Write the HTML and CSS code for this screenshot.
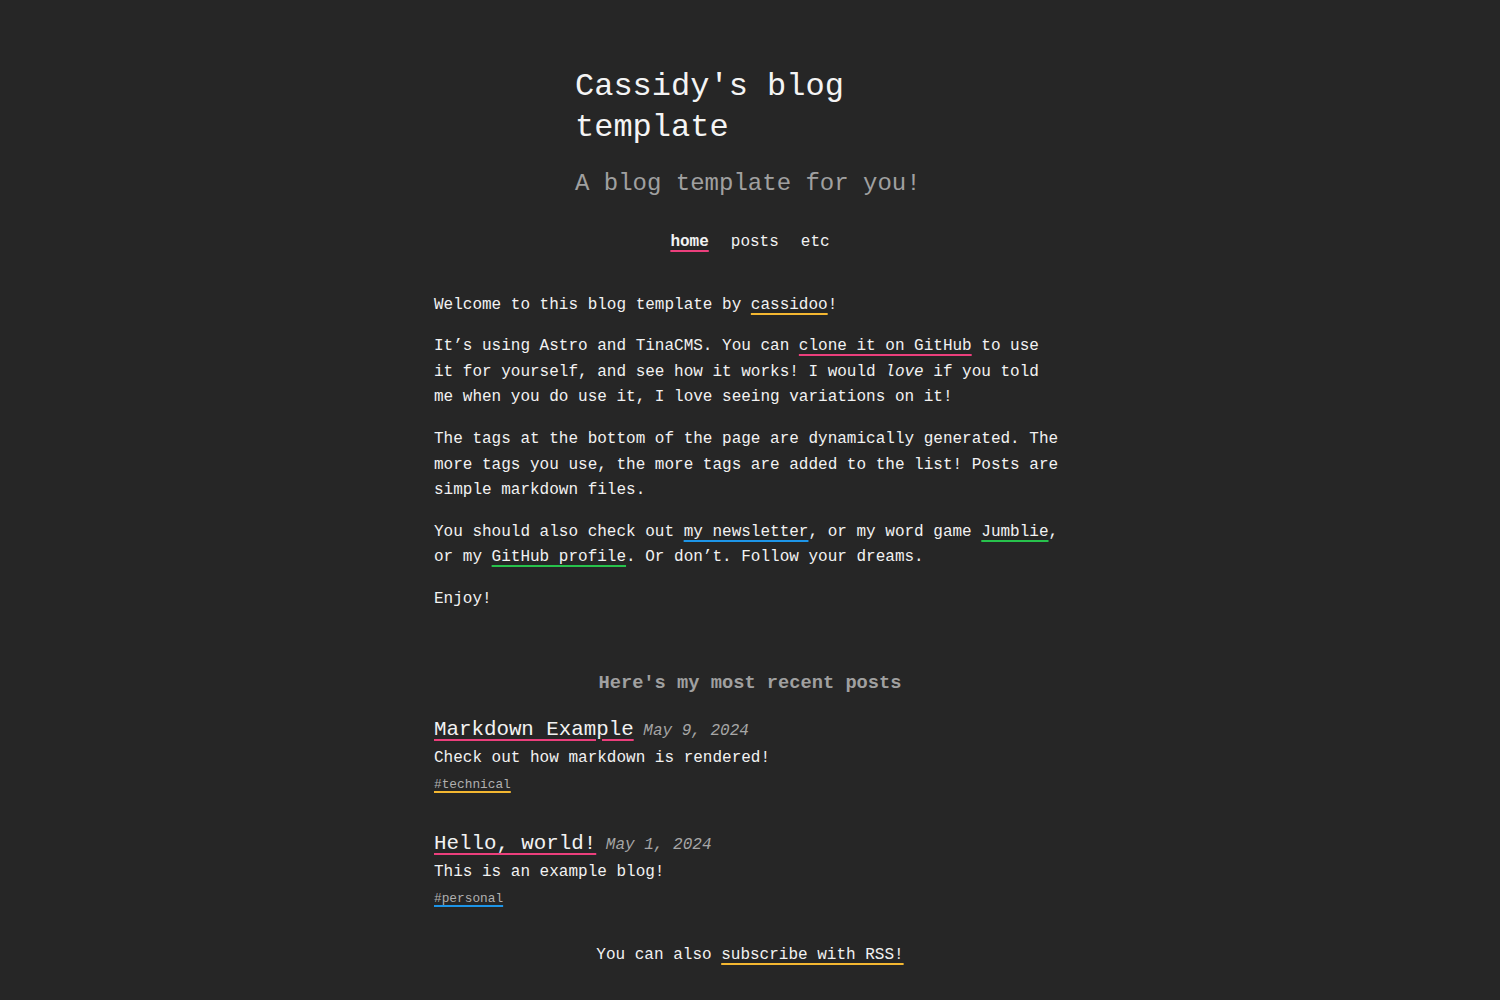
FILE: index.html
```html
<!DOCTYPE html>
<html lang="en">
<head>
<meta charset="utf-8">
<title>Cassidy's blog template</title>
<link rel="stylesheet" href="styles.css">
</head>
<body>
<header class="site-header">
  <h1 class="site-title">Cassidy's blog template</h1>
  <p class="site-subtitle">A blog template for you!</p>
</header>
<nav class="site-nav">
  <a class="nav-link active" href="#">home</a>
  <a class="nav-link" href="#">posts</a>
  <a class="nav-link" href="#">etc</a>
</nav>
<main class="content">
  <section class="intro">
    <p>Welcome to this blog template by <a class="u-yellow" href="#">cassidoo</a>!</p>
    <p>It’s using Astro and TinaCMS. You can <a class="u-pink" href="#">clone it on GitHub</a> to use it for yourself, and see how it works! I would <em>love</em> if you told me when you do use it, I love seeing variations on it!</p>
    <p>The tags at the bottom of the page are dynamically generated. The more tags you use, the more tags are added to the list! Posts are simple markdown files.</p>
    <p>You should also check out <a class="u-blue" href="#">my newsletter</a>, or my word game <a class="u-green" href="#">Jumblie</a>, or my <a class="u-green" href="#">GitHub profile</a>. Or don’t. Follow your dreams.</p>
    <p>Enjoy!</p>
  </section>
  <section class="recent">
    <h3 class="recent-heading">Here's my most recent posts</h3>
    <article class="post">
      <div class="post-head"><a class="post-title u-pink" href="#">Markdown Example</a> <span class="post-date">May 9, 2024</span></div>
      <p class="post-desc">Check out how markdown is rendered!</p>
      <a class="tag u-yellow" href="#">#technical</a>
    </article>
    <article class="post">
      <div class="post-head"><a class="post-title u-pink" href="#">Hello, world!</a> <span class="post-date">May 1, 2024</span></div>
      <p class="post-desc">This is an example blog!</p>
      <a class="tag u-blue" href="#">#personal</a>
    </article>
  </section>
  <p class="rss">You can also <a class="u-yellow" href="#">subscribe with RSS!</a></p>
</main>
</body>
</html>
```
FILE: styles.css
```css
html, body {
  margin: 0;
  padding: 0;
}
body {
  background: #262626;
  color: #f2f2f2;
  font-family: "Liberation Mono", "DejaVu Sans Mono", monospace;
  font-size: 16px;
  line-height: 1.6;
}
a {
  color: #f2f2f2;
  text-decoration: underline;
  text-decoration-thickness: 2px;
  text-underline-offset: 4px;
}
.u-pink { text-decoration-color: #ec3f7c; }
.u-yellow { text-decoration-color: #f4b731; }
.u-blue { text-decoration-color: #1d95e8; }
.u-green { text-decoration-color: #27c24c; }

.site-header {
  width: 350px;
  margin: 0 auto;
  padding-top: 66px;
}
.site-title {
  margin: 0;
  font-size: 32px;
  line-height: 41px;
  font-weight: 400;
  color: #f4f4f4;
}
.site-subtitle {
  margin: 20px 0 0;
  font-size: 24px;
  line-height: 31px;
  color: #a0a0a0;
}
.site-nav {
  display: flex;
  justify-content: center;
  gap: 22px;
  margin-top: 31px;
}
.nav-link {
  text-decoration: none;
}
.nav-link.active {
  font-weight: 700;
  text-decoration: underline;
  text-decoration-color: #ec3f7c;
  text-decoration-thickness: 2px;
  text-underline-offset: 4px;
}
.content {
  width: 632px;
  margin: 37px auto 0;
}
.intro p {
  margin: 0 0 16px;
}
em {
  font-style: italic;
}
.recent {
  margin-top: 55px;
}
.recent-heading {
  margin: 0 0 17px;
  text-align: center;
  font-size: 18.72px;
  line-height: 30px;
  color: #a0a0a0;
  font-weight: 700;
}
.post {
  margin-bottom: 31px;
}
.post-head {
  line-height: 29px;
}
.post-title {
  font-size: 20.8px;
  text-underline-offset: 4px;
}
.post-date {
  font-style: italic;
  color: #a6a6a6;
  font-size: 16px;
}
.post-desc {
  margin: 0;
}
.tag {
  display: inline-block;
  font-size: 12.8px;
  line-height: 24px;
  margin-top: 2px;
  color: #b0b0b0;
  text-underline-offset: 3px;
}
.rss {
  text-align: center;
  margin: 0;
  padding-bottom: 40px;
}
```
